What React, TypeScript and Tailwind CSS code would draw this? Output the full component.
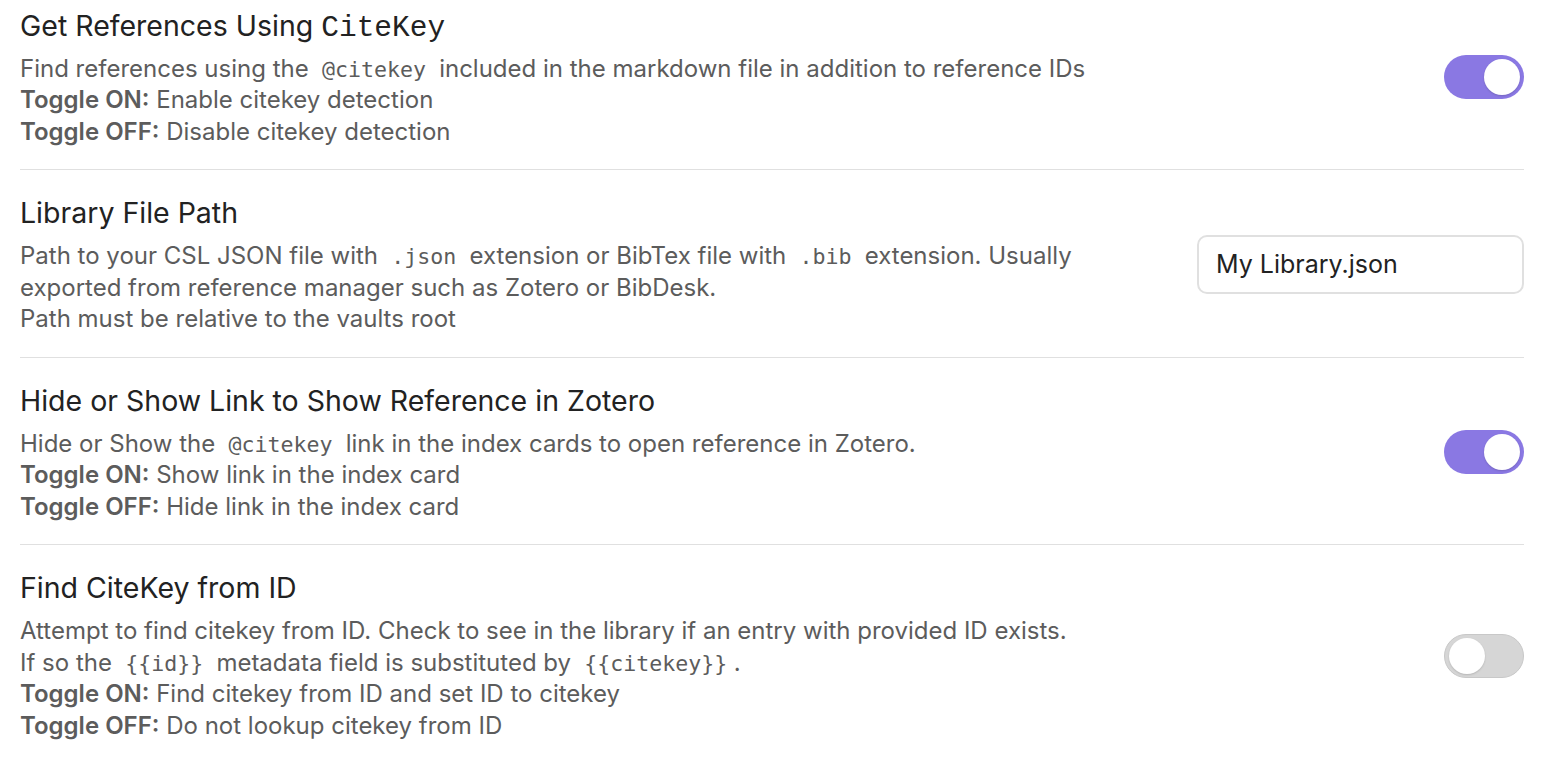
import React from 'react';

const sans = "font-['Inter','Noto_Sans',sans-serif]";

const Code: React.FC<{ children: React.ReactNode }> = ({ children }) => (
  <code className="font-['DejaVu_Sans_Mono',monospace] text-[0.9em] leading-none text-[#5c5c5c] px-[0.3em]">{children}</code>
);

const Toggle: React.FC<{ on: boolean }> = ({ on }) => (
  <div
    className={`w-[80px] h-[44px] rounded-full p-[4px] flex items-center shrink-0 ${
      on ? 'bg-[#8a78e3] justify-end' : 'bg-[#d6d6d6] justify-start border border-[#c8c8c8]'
    }`}
  >
    <div className="w-[36px] h-[36px] rounded-full bg-white shadow-[0_1px_2px_rgba(0,0,0,0.15)]" />
  </div>
);

const Item: React.FC<{
  name: React.ReactNode;
  lines: React.ReactNode[];
  control: React.ReactNode;
  first?: boolean;
  last?: boolean;
}> = ({ name, lines, control, first, last }) => (
  <div
    className={`flex items-center justify-between gap-8 ${first ? 'pt-[7.5px]' : 'pt-[25px]'} pb-[22px] ${
      last ? '' : 'border-b border-[#e0e0e0]'
    }`}
  >
    <div className="flex flex-col gap-[9px]">
      <div className="text-[28.5px] leading-[36px] h-[36px] text-[#222222]">{name}</div>
      <div className="text-[24px] leading-[31.5px] text-[#5c5c5c]">
        {lines.map((l, i) => (
          <div key={i} className="h-[31.5px]">{l}</div>
        ))}
      </div>
    </div>
    {control}
  </div>
);

const B: React.FC<{ children: React.ReactNode }> = ({ children }) => (
  <span className="font-semibold">{children}</span>
);

export default function App() {
  return (
    <div className={`w-[1568px] h-[766px] bg-white px-[20px] ${sans} overflow-hidden`}>
      <div className="w-[1504px]">
        <Item
          first
          name={
            <>
              Get References Using{' '}
              <span className="font-['Liberation_Mono',monospace] text-[29.5px] leading-none">CiteKey</span>
            </>
          }
          lines={[
            <>
              Find references using the <Code>@citekey</Code> included in the markdown file in addition to reference IDs
            </>,
            <>
              <B>Toggle ON:</B> Enable citekey detection
            </>,
            <>
              <B>Toggle OFF:</B> Disable citekey detection
            </>,
          ]}
          control={<Toggle on />}
        />
        <Item
          name="Library File Path"
          lines={[
            <>
              Path to your CSL JSON file with <Code>.json</Code> extension or BibTex file with <Code>.bib</Code> extension. Usually
            </>,
            <>exported from reference manager such as Zotero or BibDesk.</>,
            <>Path must be relative to the vaults root</>,
          ]}
          control={
            <div className="w-[327px] h-[59px] rounded-[10px] border-2 border-[#e0e0e0] flex items-center px-[17px] text-[25px] text-[#222222] shrink-0">
              My Library.json
            </div>
          }
        />
        <Item
          name="Hide or Show Link to Show Reference in Zotero"
          lines={[
            <>
              Hide or Show the <Code>@citekey</Code> link in the index cards to open reference in Zotero.
            </>,
            <>
              <B>Toggle ON:</B> Show link in the index card
            </>,
            <>
              <B>Toggle OFF:</B> Hide link in the index card
            </>,
          ]}
          control={<Toggle on />}
        />
        <Item
          last
          name="Find CiteKey from ID"
          lines={[
            <>Attempt to find citekey from ID. Check to see in the library if an entry with provided ID exists.</>,
            <>
              If so the <Code>{'{{id}}'}</Code> metadata field is substituted by <Code>{'{{citekey}}'}</Code>.
            </>,
            <>
              <B>Toggle ON:</B> Find citekey from ID and set ID to citekey
            </>,
            <>
              <B>Toggle OFF:</B> Do not lookup citekey from ID
            </>,
          ]}
          control={<Toggle on={false} />}
        />
      </div>
    </div>
  );
}
